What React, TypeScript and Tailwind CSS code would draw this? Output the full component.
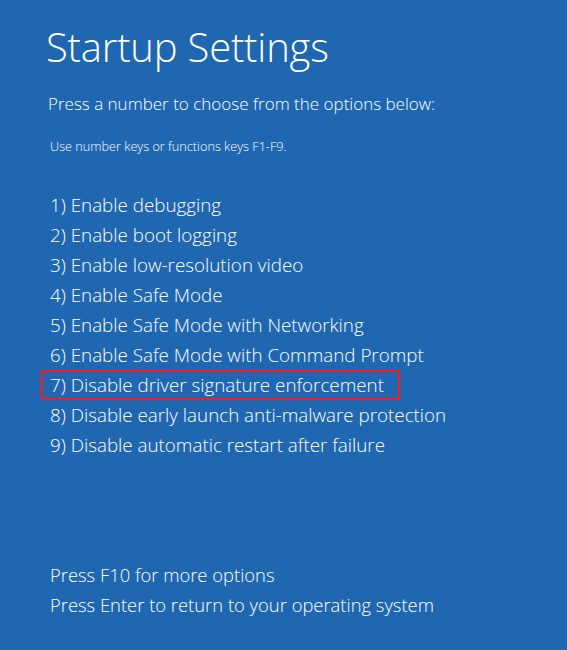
import React from "react";

const options = [
  "1) Enable debugging",
  "2) Enable boot logging",
  "3) Enable low-resolution video",
  "4) Enable Safe Mode",
  "5) Enable Safe Mode with Networking",
  "6) Enable Safe Mode with Command Prompt",
  "7) Disable driver signature enforcement",
  "8) Disable early launch anti-malware protection",
  "9) Disable automatic restart after failure",
];

export default function App() {
  return (
    <div
      className="w-[567px] h-[650px] bg-[#2067b2] text-white overflow-hidden flex flex-col"
      style={{ fontFamily: '"Open Sans", "Noto Sans", sans-serif' }}
    >
      <h1 className="pl-[46px] pt-[22px] text-[40px] leading-[50px] font-light tracking-[-0.2px]">
        Startup Settings
      </h1>
      <p className="pl-[48px] mt-[20px] text-[17px] leading-[24px] font-light">
        Press a number to choose from the options below:
      </p>
      <p className="pl-[50px] mt-[21px] text-[12.7px] leading-[18px] font-light">
        Use number keys or functions keys F1-F9.
      </p>
      <ul className="mt-[35px] pl-[41px] flex flex-col">
        {options.map((o, i) => (
          <li
            key={o}
            className={
              i === 6
                ? "h-[30px] w-[359px] border-2 border-[#ff1a1a] pl-[7px] flex items-center text-[18.8px] font-light whitespace-nowrap"
                : "h-[30px] pl-[9px] flex items-center text-[18.8px] font-light whitespace-nowrap"
            }
          >
            {o}
          </li>
        ))}
      </ul>
      <div className="mt-auto mb-[30px] pl-[50px] flex flex-col text-[18.4px] font-light leading-[30px]">
        <span>Press F10 for more options</span>
        <span>Press Enter to return to your operating system</span>
      </div>
    </div>
  );
}
